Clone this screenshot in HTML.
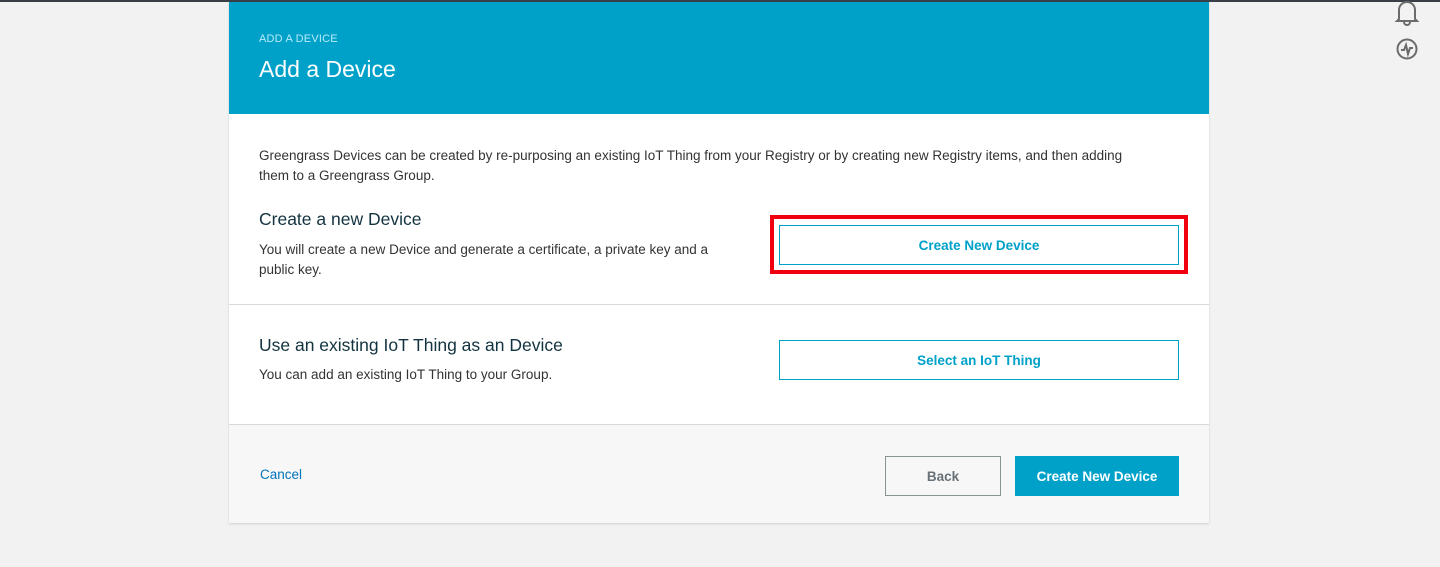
<!DOCTYPE html>
<html><head><style>
*{margin:0;padding:0;box-sizing:border-box}
body{width:1440px;height:567px;background:#f2f2f2;font-family:"Liberation Sans",sans-serif;position:relative;overflow:hidden;color:#16191f}
.topline{position:absolute;left:0;top:0;width:1440px;height:2px;background:#3a3f47}
.panel{position:absolute;left:229px;top:2px;width:980px;height:521px;background:#fff;box-shadow:0 1px 2px rgba(0,0,0,.15)}
.hdr{position:absolute;left:0;top:0;width:980px;height:112px;background:#00a1c9}
.small{position:absolute;left:30px;top:31px;font-size:11px;color:#b8ecfa;letter-spacing:.2px}
.title{position:absolute;left:30px;top:54px;font-size:23px;color:#fff}
.t{position:absolute;font-size:13.5px;line-height:20px;color:#333}
.h{position:absolute;font-size:17.5px;color:#12333f}
.btn{position:absolute;border:1px solid #00a1c9;color:#00a1c9;background:#fff;font-weight:bold;font-size:13.5px;display:flex;align-items:center;justify-content:center}
.red{position:absolute;left:541px;top:213px;width:418px;height:59px;border:4px solid #f0000f}
.div{position:absolute;left:0;width:980px;height:1px;background:#d5dbdb}
.foot{position:absolute;left:0;top:422px;width:980px;height:99px;background:#f7f7f7;border-top:1px solid #d5dbdb}
</style></head><body>
<div class="topline"></div>
<svg style="position:absolute;left:1394px;top:0" width="26" height="66" viewBox="0 0 26 66" fill="none" stroke="#6b6b6b" stroke-width="2">
<path d="M5 19 L5 10 A8 8 0 0 1 21 10 L21 19 L23 21 L3 21 Z"/><path d="M10 22 A3 3 0 0 0 16 22"/>
<circle cx="13" cy="49" r="9.5"/><path d="M7 50 L10 50 L12 45 L14 54 L16 48 L19 48"/>
</svg>
<div class="panel">
<div class="hdr"><div class="small">ADD A DEVICE</div><div class="title">Add a Device</div></div>
<div class="t" style="left:30px;top:144px;width:930px">Greengrass Devices can be created by re-purposing an existing IoT Thing from your Registry or by creating new Registry items, and then adding<br>them to a Greengrass Group.</div>
<div class="h" style="left:30px;top:207px">Create a new Device</div>
<div class="t" style="left:30px;top:238px;width:480px">You will create a new Device and generate a certificate, a private key and a public key.</div>
<div class="red"></div>
<div class="btn" style="left:550px;top:223px;width:400px;height:40px">Create New Device</div>
<div class="div" style="top:302px"></div>
<div class="h" style="left:30px;top:333px">Use an existing IoT Thing as an Device</div>
<div class="t" style="left:30px;top:363px">You can add an existing IoT Thing to your Group.</div>
<div class="btn" style="left:550px;top:338px;width:400px;height:40px">Select an IoT Thing</div>
<div class="foot">
<div style="position:absolute;left:31px;top:42px;font-size:13.5px;color:#0073bb">Cancel</div>
<div class="btn" style="left:656px;top:31px;width:116px;height:40px;border-color:#879596;color:#687078;background:#f7f7f7">Back</div>
<div class="btn" style="left:786px;top:31px;width:164px;height:40px;background:#00a1c9;color:#fff">Create New Device</div>
</div>
</div>
</body></html>
